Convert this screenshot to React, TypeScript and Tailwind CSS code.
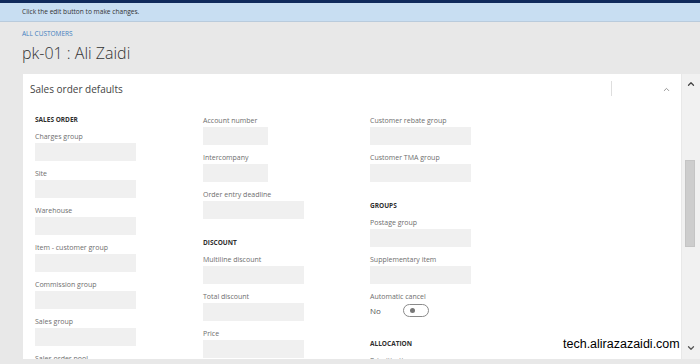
import { ChevronUp, ChevronDown } from 'lucide-react';

type Field = { label: string; w?: 'sm' | 'lg' };

function Label({ children }: { children: React.ReactNode }) {
  return <div className="h-[12px] text-[7px] leading-[12px] text-[#6e6e6e]">{children}</div>;
}

function Input({ w = 'lg' }: { w?: 'sm' | 'lg' }) {
  return <div className={w === 'sm' ? 'h-[18px] w-[65px] bg-[#f0f0f0]' : 'h-[18px] w-[101px] bg-[#f0f0f0]'} />;
}

function FieldRow({ label, w }: Field) {
  return (
    <div className="mb-[7px]">
      <Label>{label}</Label>
      <Input w={w} />
    </div>
  );
}

function Section({ title }: { title: string }) {
  return <div className="mb-[5px] h-[12px] text-[6.5px] font-bold uppercase leading-[12px] text-[#2f2f2f]">{title}</div>;
}

export default function App() {
  return (
    <div
      className="relative h-[364px] w-[700px] overflow-hidden bg-[#e8e8e8]"
      style={{ fontFamily: '"Open Sans", "Noto Sans", sans-serif' }}
    >
      {/* Top bars */}
      <div className="h-[3px] bg-[#102a5c]" />
      <div className="flex h-[19px] items-center border-b border-[#b9cbdc] bg-[#c8def2] px-[22px] text-[6.6px] text-[#333]">
        Click the edit button to make changes.
      </div>

      {/* Page header */}
      <div className="px-[22px] pt-[7px]">
        <div className="h-[10px] text-[6.5px] leading-[10px] text-[#3f7fbf]">ALL CUSTOMERS</div>
        <h1 className="mt-[3px] h-[22px] text-[16px] font-light leading-[22px] text-[#333]">pk-01 : Ali Zaidi</h1>
      </div>

      <div className="mt-[10px] flex h-[285px]">
        {/* Card */}
        <div className="ml-[23px] w-[658px] overflow-hidden bg-white">
          <div className="relative flex h-[30px] items-center pl-[7px] text-[10px] text-[#444]">
            Sales order defaults
            <div className="absolute left-[588px] top-[7px] h-[15px] w-px bg-[#dedede]" />
            <ChevronUp className="absolute right-[10px] top-[11px] h-[9px] w-[9px] text-[#777]" strokeWidth={2} />
          </div>

          <div className="grid grid-cols-[168px_167px_1fr] pl-[12px] pt-[9px]">
            {/* Column 1 */}
            <div className="pt-px">
              <Section title="Sales order" />
              <FieldRow label="Charges group" />
              <FieldRow label="Site" />
              <FieldRow label="Warehouse" />
              <FieldRow label="Item - customer group" />
              <FieldRow label="Commission group" />
              <FieldRow label="Sales group" />
              <FieldRow label="Sales order pool" />
            </div>

            {/* Column 2 */}
            <div className="pt-[2px]">
              <FieldRow label="Account number" w="sm" />
              <FieldRow label="Intercompany" w="sm" />
              <FieldRow label="Order entry deadline" />
              <div className="mt-[18px]">
                <Section title="Discount" />
                <FieldRow label="Multiline discount" />
                <FieldRow label="Total discount" />
                <FieldRow label="Price" />
              </div>
            </div>

            {/* Column 3 */}
            <div className="pt-[2px]">
              <FieldRow label="Customer rebate group" />
              <FieldRow label="Customer TMA group" />
              <div className="mt-[18px]">
                <Section title="Groups" />
                <FieldRow label="Postage group" />
                <FieldRow label="Supplementary item" />
                <Label>Automatic cancel</Label>
                <div className="flex h-[14px] items-center">
                  <span className="w-[33px] pt-[2px] text-[8px] text-[#555]">No</span>
                  <div className="flex h-[13px] w-[26px] items-center rounded-full border border-[#8a8a8a] bg-white pl-[6px]">
                    <div className="h-[5px] w-[5px] rounded-full bg-[#777]" />
                  </div>
                </div>
                <div className="mt-[21px]">
                  <Section title="Allocation" />
                  <Label>Prioritization</Label>
                </div>
              </div>
            </div>
          </div>
        </div>

        {/* Scrollbar */}
        <div className="relative ml-px w-[18px] bg-[#f1f1f1]">
          <ChevronUp className="absolute left-[4px] top-[5px] h-[10px] w-[10px] text-[#444]" strokeWidth={3} />
          <div className="absolute left-[3px] top-[86px] h-[87px] w-[10px] border border-[#c4c4c4] bg-[#cdcdcd]" />
          <ChevronDown className="absolute left-[4px] bottom-[6px] h-[10px] w-[10px] text-[#555]" strokeWidth={3} />
        </div>
      </div>

      {/* Watermark */}
      <div
        className="absolute left-[563px] top-[336px] text-[12.5px] leading-[16px] text-black"
        style={{ fontFamily: '"Liberation Sans", Arial, sans-serif' }}
      >
        tech.alirazazaidi.com
      </div>
    </div>
  );
}
